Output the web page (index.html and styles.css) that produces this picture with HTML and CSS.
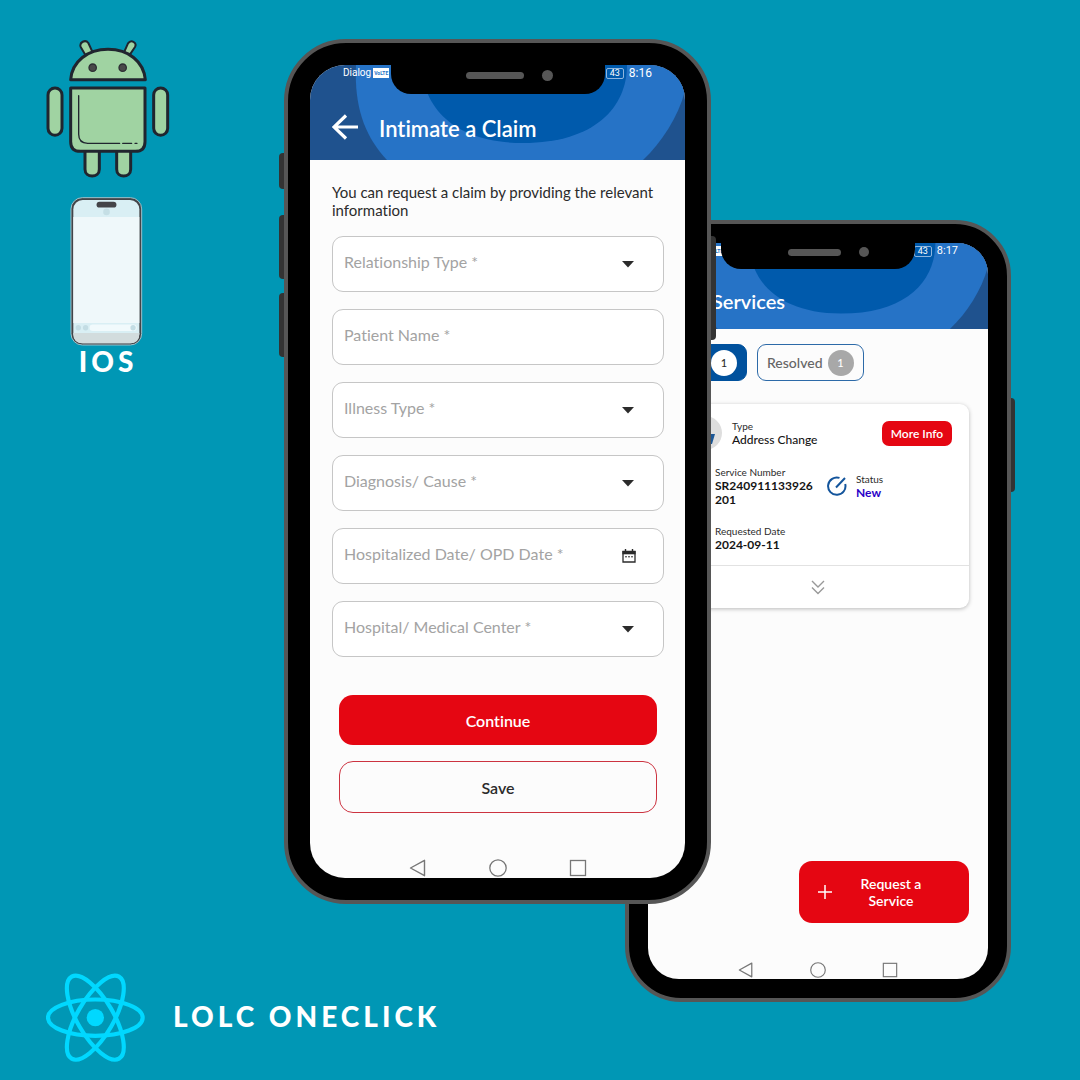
FILE: index.html
```html
<!DOCTYPE html>
<html lang="en">
<head>
<meta charset="utf-8">
<meta name="viewport" content="width=device-width, initial-scale=1">
<title>LOLC OneClick</title>
<link rel="stylesheet" href="styles.css">
</head>
<body>
<svg class="defs" aria-hidden="true">
  <symbol id="waves" viewBox="0 0 375 95" preserveAspectRatio="none">
    <rect width="375" height="95" fill="#1f528e"/>
    <path d="M46 0C44 42 55 72 77 95H333C352 77 368 52 375 26V0Z" fill="#2673c6"/>
    <path d="M112 0C112 40 142 78 213 78C285 78 317 42 317 0Z" fill="#005aac"/>
  </symbol>
  <symbol id="back" viewBox="0 0 26 26"><path d="M26 13H2M14 1.500L2 13L14 24.500" fill="none" stroke="#fff" stroke-width="3.200"/></symbol>
  <symbol id="caret" viewBox="0 0 12 7"><path d="M0 0H12L6 6.500Z" fill="#2b2b2b"/></symbol>
  <symbol id="nav-back" viewBox="0 0 18 18"><path d="M15.500 1.300V16.700L1.500 9Z" fill="none" stroke="#777" stroke-width="1.400" stroke-linejoin="round"/></symbol>
  <symbol id="nav-home" viewBox="0 0 18 18"><circle cx="9" cy="9" r="8.200" fill="none" stroke="#777" stroke-width="1.300"/></symbol>
  <symbol id="nav-recent" viewBox="0 0 18 18"><rect x="1.500" y="1.500" width="15" height="15" fill="none" stroke="#777" stroke-width="1.300"/></symbol>
</svg>

<main class="poster">
  <aside class="platforms">
    <svg class="android" viewBox="48 54 372 420" role="img" aria-label="Android">
      <g fill="#a0d3a2" stroke="#20252f" stroke-width="9" stroke-linejoin="round" stroke-linecap="round">
        <path d="M164 98L152 78C147 64 166 54 175 66L188 94M282 94L294 67C303 54 322 64 315 78L300 100" stroke-width="6"/>
        <path d="M122 176C126 122 172 85 234 85S341 122 346 176Z"/>
        <path d="M165 390V445C165 472 208 472 208 445V390M260 390V445C260 472 302 472 302 445V390"/>
        <path d="M122 201H345V362Q345 391 316 391H151Q122 391 122 362Z"/>
        <rect x="54" y="201" width="42" height="142" rx="21"/>
        <rect x="371" y="201" width="42" height="142" rx="21"/>
        <path d="M146 224V340Q146 367 173 367H269M278 367H305M315 367H321" fill="none" stroke-width="4"/>
      </g>
      <circle cx="188" cy="140" r="11" fill="#494949" stroke="#2d2f34" stroke-width="4"/>
      <circle cx="278" cy="140" r="11" fill="#494949" stroke="#2d2f34" stroke-width="4"/>
    </svg>
    <svg class="iphone" viewBox="57 18 220 450" role="img" aria-label="iPhone">
      <rect x="60" y="22" width="213" height="444" rx="34" fill="#444448" stroke="#9fc3cc" stroke-width="3"/>
      <rect x="67" y="29" width="199" height="432" rx="28" fill="#d9eff4"/>
      <path d="M67 80H266V400H67Z" fill="#eff8fa"/>
      <path d="M67 430H266V433Q266 461 238 461H95Q67 461 67 433Z" fill="#d2dcdd"/>
      <rect x="137" y="34" width="60" height="18" rx="9" fill="#444448"/>
      <circle cx="167" cy="65" r="10" fill="#c5dfe5"/>
      <circle cx="82" cy="414" r="8" fill="#c3dde4"/><circle cx="104" cy="414" r="8" fill="#c3dde4"/>
      <rect x="116" y="404" width="142" height="20" rx="10" fill="#f1fafc"/>
      <circle cx="247" cy="414" r="8" fill="#c3dde4"/>
    </svg>
    <p class="caption">IOS</p>
  </aside>

  <section class="phone phone-front" aria-label="Intimate a Claim">
    <span class="key key-mute"></span><span class="key key-up"></span><span class="key key-down"></span><span class="key key-power"></span>
    <div class="screen">
      <div class="notch"><span class="speaker"></span><span class="camera"></span></div>
      <header class="top">
        <svg class="waves" aria-hidden="true"><use href="#waves"/></svg>
        <div class="status"><span class="carrier">Dialog <b class="volte">VoLTE</b></span><span class="clock"><span class="battery">43</span>8:16</span></div>
        <div class="title-bar">
          <button class="back" type="button" aria-label="Back"><svg><use href="#back"/></svg></button>
          <h1>Intimate a Claim</h1>
        </div>
      </header>
      <form class="claim">
        <p class="intro">You can request a claim by providing the relevant information</p>
        <div class="field"><select aria-label="Relationship Type"><option>Relationship Type *</option></select><svg class="caret" aria-hidden="true"><use href="#caret"/></svg></div>
        <div class="field"><input type="text" aria-label="Patient Name" placeholder="Patient Name *"></div>
        <div class="field"><select aria-label="Illness Type"><option>Illness Type *</option></select><svg class="caret" aria-hidden="true"><use href="#caret"/></svg></div>
        <div class="field"><select aria-label="Diagnosis or cause"><option>Diagnosis/ Cause *</option></select><svg class="caret" aria-hidden="true"><use href="#caret"/></svg></div>
        <div class="field"><input type="text" aria-label="Hospitalized or OPD date" placeholder="Hospitalized Date/ OPD Date *">
          <svg class="calendar" viewBox="0 0 14 14" aria-hidden="true"><path d="M1 2.500H13V13H1Z" fill="none" stroke="#2b2b2b" stroke-width="1.300"/><path d="M.4 2H13.600V5.300H.4Z" fill="#2b2b2b"/><path d="M3.500 0V3M10.500 0V3" stroke="#2b2b2b" stroke-width="1.400"/><path d="M3 7.800H5M6 7.800H8M9 7.800H11" stroke="#2b2b2b"/></svg></div>
        <div class="field"><select aria-label="Hospital or medical center"><option>Hospital/ Medical Center *</option></select><svg class="caret" aria-hidden="true"><use href="#caret"/></svg></div>
        <div class="actions">
          <button class="primary" type="button">Continue</button>
          <button class="outline" type="button">Save</button>
        </div>
      </form>
      <nav class="nav" aria-label="System">
        <svg><use href="#nav-back"/></svg><svg><use href="#nav-home"/></svg><svg><use href="#nav-recent"/></svg>
      </nav>
    </div>
  </section>

  <section class="phone phone-rear" aria-label="Services">
    <span class="key key-power"></span>
    <div class="screen">
      <div class="notch"><span class="speaker"></span><span class="camera"></span></div>
      <header class="top">
        <svg class="waves" aria-hidden="true"><use href="#waves"/></svg>
        <div class="status"><span class="carrier">Dialog <b class="volte">VoLTE</b></span><span class="clock"><span class="battery">43</span>8:17</span></div>
        <div class="title-bar">
          <button class="back" type="button" aria-label="Back"><svg><use href="#back"/></svg></button>
          <h1>Services</h1>
        </div>
      </header>
      <div class="services">
        <div class="tabs">
          <button class="tab tab-active" type="button"><span class="count">1</span></button>
          <button class="tab" type="button">Resolved <span class="count">1</span></button>
        </div>
        <article class="card">
          <div class="card-head">
            <svg class="avatar" viewBox="0 0 34 34" aria-hidden="true"><circle cx="17" cy="17" r="17" fill="#dedede"/><path d="M10 18H27L24 28H10Z" fill="#1b5796"/></svg>
            <p class="pair"><span>Type</span><strong class="plain">Address Change</strong></p>
            <button class="more" type="button">More Info</button>
          </div>
          <div class="details">
            <p class="pair"><span>Service Number</span><strong>SR240911133926<wbr>201</strong></p>
            <div class="state">
              <svg class="gauge" viewBox="0 0 20 20" aria-hidden="true"><path d="M12.500 1.900A8.700 8.700 0 1 0 18.200 8M9 11.500L18 2" fill="none" stroke="#14559c" stroke-width="2"/></svg>
              <p class="pair"><span>Status</span><strong class="new">New</strong></p>
            </div>
            <p class="pair"><span>Requested Date</span><strong>2024-09-11</strong></p>
          </div>
          <button class="expand" type="button" aria-label="Show more"><svg viewBox="0 0 14 15"><path d="M1 1L7 7L13 1M1 7.500L7 13.500L13 7.500" fill="none" stroke="#999" stroke-width="1.400"/></svg></button>
        </article>
        <button class="request" type="button"><svg viewBox="0 0 14 14" aria-hidden="true"><path d="M7 0V14M0 7H14" stroke="#fff" stroke-width="1.500"/></svg><span>Request a Service</span></button>
      </div>
      <nav class="nav" aria-label="System">
        <svg><use href="#nav-back"/></svg><svg><use href="#nav-home"/></svg><svg><use href="#nav-recent"/></svg>
      </nav>
    </div>
  </section>

  <footer class="brand">
    <svg class="react" viewBox="78 70 297 267" role="img" aria-label="React">
      <circle cx="226" cy="204" r="26" fill="#00d8ff"/>
      <g fill="none" stroke="#00d8ff" stroke-width="12.500">
        <ellipse cx="226" cy="204" rx="142" ry="54.500"/>
        <ellipse cx="226" cy="204" rx="142" ry="54.500" transform="rotate(60 226 204)"/>
        <ellipse cx="226" cy="204" rx="142" ry="54.500" transform="rotate(120 226 204)"/>
      </g>
    </svg>
    <p class="caption">LOLC ONECLICK</p>
  </footer>
</main>
</body>
</html>
```
FILE: styles.css
```css
* { box-sizing: border-box; }

body {
  margin: 0;
  background: #0097b5;
  font-family: Lato, "Open Sans", sans-serif;
  font-variant-ligatures: none;
  color: #2b2b2b;
}

h1, p { margin: 0; }
svg { display: block; }
button, input, select { font: inherit; font-variant-ligatures: none; color: inherit; border: 0; background: none; padding: 0; margin: 0; }
.defs { position: absolute; width: 0; height: 0; }

/* Poster: the two phones share the third track, where they overlap */
.poster {
  display: grid;
  grid-template-columns: minmax(0, 284fr) minmax(0, 341fr) minmax(0, 86fr) minmax(0, 300fr) minmax(0, 69fr);
  align-items: start;
  min-height: 100vh;
  padding: 39px 0 18px;
}

.platforms {
  grid-area: 1 / 1;
  display: flex;
  flex-direction: column;
  align-items: center;
  width: 124px;
  margin-left: 46px;
}
.android { width: 124px; height: 140px; }
.iphone { width: 73px; height: 150px; margin: 17px 4px 0 0; }

.caption {
  color: #fff;
  font-size: 28px;
  font-weight: 900;
  line-height: 30px;
  letter-spacing: 4px;
}

.brand {
  grid-area: 1 / 1 / 2 / 3;
  align-self: end;
  display: flex;
  align-items: center;
  gap: 28px;
  padding-left: 46px;
}
.brand .caption { padding-bottom: 4px; }
.react { width: 99px; height: 89px; }

/* Phone shell */
.phone {
  position: relative;
  background: #000;
  border: 4px solid #565656;
}
.phone-front { grid-area: 1 / 2 / 2 / 4; z-index: 2; padding: 22px; border-radius: 62px; }
.phone-rear { grid-area: 1 / 3 / 2 / 5; margin-top: 181px; padding: 19px; border-radius: 56px; }

.screen {
  position: relative;
  display: flex;
  flex-direction: column;
  overflow: hidden;
  background: #fcfcfc;
  border-radius: 35px;
  aspect-ratio: 375 / 813;
}
.phone-rear .screen { border-radius: 31px; aspect-ratio: 340 / 736; }

.key { position: absolute; left: -9px; width: 5px; background: #333; border-radius: 4px 0 0 4px; }
.key-mute { top: 110px; height: 36px; }
.key-up { top: 172px; height: 64px; }
.key-down { top: 250px; height: 64px; }
.key-power { top: 193px; height: 104px; left: auto; right: -9px; border-radius: 0 4px 4px 0; }
.phone-rear .key-power { top: 174px; height: 94px; right: -8px; width: 4px; }

.notch {
  position: absolute;
  z-index: 1;
  top: 0;
  left: 50%;
  width: 214px;
  height: 29px;
  transform: translateX(-50%);
  display: flex;
  justify-content: center;
  gap: 18px;
  padding: 5px 0 0 23px;
  background: #000;
  border-radius: 0 0 20px 20px;
}
.speaker { width: 58px; height: 7px; margin-top: 2px; border-radius: 4px; background: #565656; }
.camera { width: 11px; height: 11px; border-radius: 50%; background: #565656; }
.phone-rear .notch { width: 194px; height: 26px; padding: 4px 0 0 20px; }
.phone-rear .speaker { width: 53px; }
.phone-rear .camera { width: 10px; height: 10px; }

/* App header */
.top { position: relative; height: 95px; color: #fff; }
.waves { position: absolute; width: 100%; height: 100%; }
.status {
  position: relative;
  display: flex;
  justify-content: space-between;
  padding: 0 33px;
  font: 12px/16px Roboto, sans-serif;
}
.carrier, .clock { display: flex; align-items: center; gap: 2px; }
.carrier { font-size: 10px; }
.clock { gap: 5px; }
.volte { padding: 0 1px; background: #fff; color: #2673c6; font-size: 5px; line-height: 10px; }
.battery { width: 18px; border: 1px solid #8fb5dd; border-radius: 2px; font-size: 9px; line-height: 9px; text-align: center; }
.title-bar { position: relative; display: flex; align-items: center; gap: 21px; padding: 32px 22px 0; }
.back { width: 26px; height: 26px; margin-bottom: 4px; cursor: pointer; }
.back svg { width: 26px; height: 26px; }
h1 { font-size: 22px; line-height: 32px; font-weight: 600; }

.phone-rear .top { height: 86px; }
.phone-rear .status { padding: 0 30px; font-size: 11px; }
.phone-rear .title-bar { gap: 18px; padding: 26px 20px 0; }
.phone-rear h1 { font-size: 20px; }

/* Claim form */
.claim { display: flex; flex-direction: column; gap: 17px; padding: 23px 21px 0 22px; }
.intro { font-size: 15px; line-height: 18px; }
.field {
  display: flex;
  align-items: center;
  height: 56px;
  padding: 0 29px 4px 11px;
  background: #fff;
  border: 1px solid #c6c6c6;
  border-radius: 11px;
  color: #a3a3a3;
  font-size: 16px;
}
.field select, .field input { flex: 1; min-width: 0; appearance: none; outline: 0; line-height: 24px; }
.field input::placeholder { color: inherit; opacity: 1; }
.caret { width: 12px; height: 7px; margin-top: 4px; }
.calendar { width: 14px; height: 14px; margin: 4px -2px 0 0; }

.actions { display: flex; flex-direction: column; gap: 16px; padding: 21px 7px 0; }
.actions button { height: 50px; border-radius: 14px; font-size: 16px; font-weight: 600; cursor: pointer; }
.actions .primary { background: #e50612; color: #fff; }
.actions .outline { height: 52px; border: 1px solid #cc3340; }

.nav { display: flex; justify-content: center; gap: 62px; margin-top: auto; padding-bottom: 1px; }
.nav svg { width: 18px; height: 18px; }
.phone-rear .nav { gap: 56px; }
.phone-rear .nav svg { width: 16px; height: 16px; }

/* Services list */
.services { flex: 1; display: flex; flex-direction: column; padding: 15px 19px 39px; }
.tabs { display: flex; gap: 10px; }
.tab {
  display: flex;
  align-items: center;
  justify-content: flex-end;
  gap: 5px;
  height: 37px;
  padding: 0 9px;
  border: 1px solid #2d6aa8;
  border-radius: 9px;
  color: #666;
  font-size: 14px;
  font-weight: 500;
}
.tab-active { width: 80px; background: #00519d; border-color: #00519d; }
.count { width: 26px; border-radius: 50%; background: #a8a8a8; color: #fff; font-size: 11px; line-height: 26px; text-align: center; }
.tab-active .count { background: #fff; color: #2b2b2b; }

.card { margin-top: 23px; background: #fff; border-radius: 9px; box-shadow: 0 1px 4px #0004; }
.card-head { display: flex; align-items: center; gap: 10px; padding: 12px 17px 0 21px; }
.avatar { width: 34px; height: 34px; }
.pair { display: flex; flex-direction: column; font-size: 10px; line-height: 14px; }
.pair strong { font-size: 12px; font-weight: 700; color: #151515; }
.pair .plain { font-weight: 500; }
.pair .new { color: #2a00c8; }
.more { margin-left: auto; width: 70px; height: 25px; border-radius: 7px; background: #e50612; color: #fff; font-size: 12px; font-weight: 600; }
.details { display: grid; grid-template-columns: 102px 1fr; column-gap: 10px; row-gap: 17px; padding: 15px 17px 13px 48px; }
.state { display: flex; gap: 9px; align-items: center; align-self: center; }
.gauge { width: 20px; height: 20px; }
.expand { display: flex; justify-content: center; align-items: center; width: 100%; height: 43px; border-top: 1px solid #e2e2e2; }
.expand svg { width: 14px; height: 15px; }

.request {
  display: flex;
  align-items: center;
  gap: 19px;
  width: 170px;
  height: 62px;
  margin: auto 0 0 auto;
  padding: 0 38px 0 19px;
  border-radius: 13px;
  background: #e50612;
  color: #fff;
  font-size: 14px;
  font-weight: 600;
  line-height: 17px;
}
.request svg { flex: none; width: 14px; height: 14px; }
.request span { flex: 1; }
```
